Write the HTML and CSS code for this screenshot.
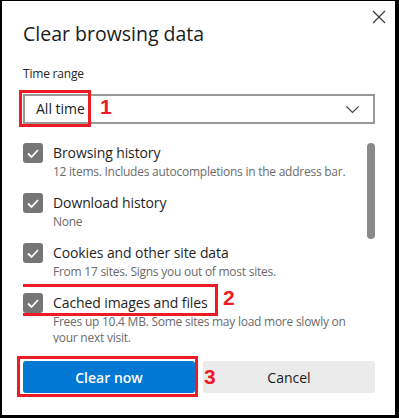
FILE: index.html
```
<!DOCTYPE html>
<html lang="en">
<head>
  <meta charset="UTF-8">
  <title>Clear browsing data</title>
  <link rel="stylesheet" href="styles.css">
</head>
<body>
  <div class="dialog">
    <button class="close" aria-label="Close">
      <svg width="14" height="14" viewBox="0 0 14 14"><path d="M1 1 L13 13 M13 1 L1 13" stroke="#3b3b3b" stroke-width="1.2" fill="none"/></svg>
    </button>

    <h1 class="title">Clear browsing data</h1>

    <div class="field-label">Time range</div>
    <div class="select">
      <span class="select-value">All time</span>
      <svg class="chevron" width="13" height="7" viewBox="0 0 13 7"><path d="M0.5 0.5 L6.5 6.5 L12.5 0.5" stroke="#444" stroke-width="1.1" fill="none"/></svg>
      <span class="mark mark-1"></span>
      <span class="num num-1">1</span>
    </div>

    <div class="list">
      <div class="items">
        <div class="item">
          <span class="box"><svg width="20" height="20" viewBox="0 0 20 20"><path d="M5 10.5 L8.5 14 L15 7" stroke="#fff" stroke-width="1.8" fill="none"/></svg></span>
          <div class="item-title">Browsing history</div>
          <div class="item-desc">12 items. Includes autocompletions in the address bar.</div>
        </div>
        <div class="item">
          <span class="box"><svg width="20" height="20" viewBox="0 0 20 20"><path d="M5 10.5 L8.5 14 L15 7" stroke="#fff" stroke-width="1.8" fill="none"/></svg></span>
          <div class="item-title">Download history</div>
          <div class="item-desc">None</div>
        </div>
        <div class="item">
          <span class="box"><svg width="20" height="20" viewBox="0 0 20 20"><path d="M5 10.5 L8.5 14 L15 7" stroke="#fff" stroke-width="1.8" fill="none"/></svg></span>
          <div class="item-title">Cookies and other site data</div>
          <div class="item-desc">From 17 sites. Signs you out of most sites.</div>
        </div>
        <div class="item">
          <span class="box"><svg width="20" height="20" viewBox="0 0 20 20"><path d="M5 10.5 L8.5 14 L15 7" stroke="#fff" stroke-width="1.8" fill="none"/></svg></span>
          <div class="item-title">Cached images and files</div>
          <div class="item-desc">Frees up 10.4 MB. Some sites may load more slowly on your next visit.</div>
          <span class="mark mark-2"></span>
          <span class="num num-2">2</span>
        </div>
      </div>
      <div class="scrollbar"></div>
    </div>

    <div class="actions">
      <button class="btn btn-primary">Clear now</button>
      <button class="btn btn-secondary">Cancel</button>
      <span class="mark mark-3"></span>
      <span class="num num-3">3</span>
    </div>
  </div>
</body>
</html>
```

FILE: styles.css
```
html, body {
  margin: 0;
  padding: 0;
  background: #fff;
}
.dialog {
  position: relative;
  box-sizing: border-box;
  width: 399px;
  height: 418px;
  border-style: solid;
  border-color: #000;
  border-width: 1px 4px 3px 2px;
  padding: 20px 20px 22px 21px;
  background: #fff;
  color: #1b1b1b;
  font-family: "Open Sans", "Noto Sans", sans-serif;
  overflow: hidden;
}
.close {
  position: absolute;
  top: 9px;
  right: 9px;
  width: 14px;
  height: 14px;
  padding: 0;
  border: none;
  background: none;
  display: flex;
}
.title {
  margin: 0;
  font-size: 19.5px;
  line-height: 26px;
  font-weight: 400;
  color: #1b1b1b;
}
.field-label {
  margin-top: 19px;
  font-size: 12px;
  line-height: 16px;
  letter-spacing: -0.2px;
  color: #262626;
}
.select {
  position: relative;
  margin-top: 12px;
  box-sizing: border-box;
  height: 30px;
  border: 2px solid #999;
  padding: 0 14px 0 11px;
  display: flex;
  align-items: center;
  justify-content: space-between;
  font-size: 14px;
  line-height: 20px;
  color: #1b1b1b;
}
.list {
  margin-top: 11px;
  height: 208px;
  box-sizing: border-box;
  padding-top: 8px;
  overflow: hidden;
  display: flex;
  gap: 10px;
}
.items {
  flex: 1;
}
.item {
  position: relative;
  display: grid;
  grid-template-columns: 20px 1fr;
  column-gap: 10px;
  margin-bottom: 13px;
}
.box {
  grid-row: 1;
  width: 20px;
  height: 20px;
  border-radius: 3px;
  background: #767676;
  display: flex;
}
.item-title {
  grid-column: 2;
  grid-row: 1;
  font-size: 14px;
  line-height: 20px;
  letter-spacing: -0.1px;
  color: #1f1f1f;
}
.item-desc {
  grid-column: 2;
  margin-top: 1px;
  font-size: 12px;
  line-height: 16px;
  letter-spacing: -0.25px;
  color: #6b6b6b;
}
.scrollbar {
  width: 8px;
  height: 96px;
  border-radius: 4px;
  background: #8a8a8a;
  flex-shrink: 0;
}
.actions {
  position: relative;
  margin-top: 18px;
  display: flex;
  gap: 8px;
}
.btn {
  flex: 1;
  height: 32px;
  border: none;
  border-radius: 3px;
  font-family: "Open Sans", "Noto Sans", sans-serif;
  font-size: 14px;
  font-weight: 600;
}
.btn-primary {
  background: #0078d4;
  color: #fff;
}
.btn-secondary {
  background: #ebebeb;
  color: #1b1b1b;
  font-weight: 400;
}
.mark {
  position: absolute;
  box-sizing: border-box;
  border: 3px solid #ed1c24;
}
.num {
  position: absolute;
  font-family: "Liberation Sans", Arial, sans-serif;
  font-weight: 700;
  font-size: 21px;
  line-height: 20px;
  color: #ed1c24;
}
.mark-1 { left: -6px; top: -6px; width: 72px; height: 37px; }
.num-1 { left: 75px; top: 1px; }
.mark-2 { left: -6px; top: -9px; width: 201px; height: 32px; }
.num-2 { left: 200px; top: -5px; }
.mark-3 { left: -6px; top: -5px; width: 181px; height: 41px; }
.num-3 { left: 181px; top: 6px; }
```
